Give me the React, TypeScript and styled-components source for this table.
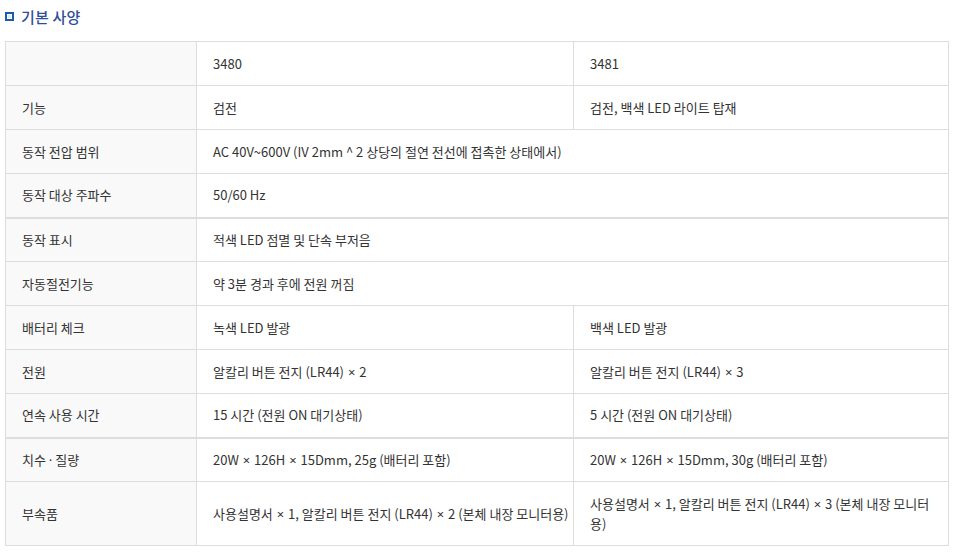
import React from "react";
import styled, { createGlobalStyle } from "styled-components";

const Global = createGlobalStyle`
  html, body { margin: 0; padding: 0; background: #fff; }
  body { font-family: "Noto Sans CJK KR", "Noto Sans", sans-serif; color: #333; }
`;

const Page = styled.div`
  padding: 5px 5px 0 5px;
  width: 943px;
`;

const Title = styled.h3`
  display: flex;
  align-items: center;
  gap: 7px;
  margin: 0;
  height: 22px;
  font-size: 15px;
  font-weight: 500;
  color: #2e4e9a;
  letter-spacing: 0.2px;
`;

const Bullet = styled.span`
  display: inline-block;
  width: 5px;
  height: 5px;
  border: 2px solid #1f5aa8;
  background: #dbe8f6;
  box-shadow: inset 0 0 0 1px #fff;
`;

const Table = styled.table`
  margin-top: 14px;
  width: 943px;
  border-collapse: collapse;
  table-layout: fixed;
  font-size: 13px;
  color: #333;
`;

const Row = styled.tr<{ $thick?: boolean; $tall?: boolean }>`
  height: ${(p) => (p.$tall ? 64 : 44)}px;
  & > td { border-top: ${(p) => (p.$thick ? "2px" : "1px")} solid #ddd; }
`;

const Head = styled.td`
  background: #f9f9f9;
  border: 1px solid #ddd;
  padding: 0 16px;
  vertical-align: middle;
  line-height: 20px;
`;

const Cell = styled.td`
  background: #fff;
  border: 1px solid #ddd;
  padding: 0 16px;
  vertical-align: middle;
  line-height: 20px;
`;

const Sym = styled.span<{ $pad?: boolean }>`
  font-family: "Noto Sans", sans-serif;
  margin: 0 ${(p) => (p.$pad ? 1 : 0)}px;
`;

const Narrow = styled.span`
  white-space: nowrap;
`;

type R = { h: string; a: string; b?: string; thick?: boolean; tall?: boolean };

const rows: R[] = [
  { h: "", a: "3480", b: "3481" },
  { h: "기능", a: "검전", b: "검전, 백색 LED 라이트 탑재" },
  { h: "동작 전압 범위", a: "AC 40V~600V (IV 2mm ^ 2 상당의 절연 전선에 접촉한 상태에서)" },
  { h: "동작 대상 주파수", a: "50/60 Hz" },
  { h: "동작 표시", a: "적색 LED 점멸 및 단속 부저음", thick: true },
  { h: "자동절전기능", a: "약 3분 경과 후에 전원 꺼짐" },
  { h: "배터리 체크", a: "녹색 LED 발광", b: "백색 LED 발광" },
  { h: "전원", a: "알칼리 버튼 전지 (LR44) × 2", b: "알칼리 버튼 전지 (LR44) × 3" },
  { h: "연속 사용 시간", a: "15 시간 (전원 ON 대기상태)", b: "5 시간 (전원 ON 대기상태)" },
  { h: "치수 · 질량", a: "20W × 126H × 15Dmm, 25g (배터리 포함)", b: "20W × 126H × 15Dmm, 30g (배터리 포함)", thick: true },
  {
    h: "부속품",
    a: "사용설명서 × 1, 알칼리 버튼 전지 (LR44) × 2 (본체 내장 모니터용)",
    b: "사용설명서 × 1, 알칼리 버튼 전지 (LR44) × 3 (본체 내장 모니터 용)",
    tall: true,
  },
];

function Text({ s }: { s: string }) {
  const parts = s.split(/([×·])/);
  return (
    <>
      {parts.map((p, i) =>
        p === "×" || p === "·" ? (
          <Sym key={i} $pad={p === "×"}>
            {p}
          </Sym>
        ) : (
          <React.Fragment key={i}>{p}</React.Fragment>
        )
      )}
    </>
  );
}

export default function App() {
  return (
    <>
      <Global />
      <Page>
        <Title>
          <Bullet />
          기본 사양
        </Title>
        <Table>
          <colgroup>
            <col style={{ width: 191 }} />
            <col style={{ width: 377 }} />
            <col style={{ width: 375 }} />
          </colgroup>
          <tbody>
            {rows.map((r, i) => (
              <Row key={i} $thick={r.thick} $tall={r.tall}>
                <Head>
                  <Text s={r.h} />
                </Head>
                {r.b === undefined ? (
                  <Cell colSpan={2}>
                    <Text s={r.a} />
                  </Cell>
                ) : (
                  <>
                    <Cell>
                      {r.tall ? (
                        <Narrow>
                          <Text s={r.a} />
                        </Narrow>
                      ) : (
                        <Text s={r.a} />
                      )}
                    </Cell>
                    <Cell>
                      <Text s={r.b} />
                    </Cell>
                  </>
                )}
              </Row>
            ))}
          </tbody>
        </Table>
      </Page>
    </>
  );
}
